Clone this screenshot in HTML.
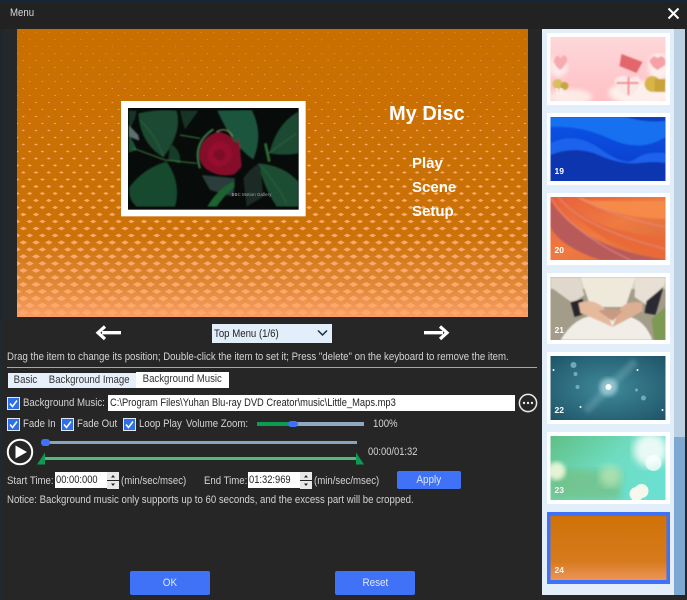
<!DOCTYPE html>
<html><head><meta charset="utf-8"><title>Menu</title>
<style>
html,body{margin:0;padding:0;width:687px;height:600px;overflow:hidden;background:#262626}
body{position:relative;font-family:"Liberation Sans","DejaVu Sans",sans-serif;font-size:11px;color:#d4d4d4}
.a{position:absolute}
.t{position:absolute;white-space:nowrap;line-height:14px;height:14px;transform:scaleX(.875);transform-origin:0 0}
.h{position:absolute;white-space:nowrap;font-weight:bold;color:#fff}
.cb{position:absolute;width:13px;height:13px}
.in{position:absolute;background:#fff;color:#222;line-height:16px;height:16px;overflow:hidden}
.in span{display:block;white-space:nowrap;transform:scaleX(.85);transform-origin:0 0}
.tab{position:absolute;background:#e6effa;color:#333;text-align:center;line-height:15px;height:15px;top:373px}
.tab span{display:inline-block;white-space:nowrap;transform:scaleX(.875)}
.btn{position:absolute;background:#3f72f7;color:#dfe8ff;text-align:center;border-radius:2px}
.btn span{display:inline-block;transform:scaleX(.9)}
</style></head><body>
<div class="a" style="left:0;top:0;width:687px;height:2px;background:#14263a"></div>
<div class="a" style="left:0;top:2px;width:687px;height:27px;background:#222"></div>
<div class="a" style="left:0;top:29px;width:17px;height:290px;background:linear-gradient(90deg,#1c262c 0,#23282a 3px,#24282a 100%)"></div>
<div class="a" style="left:0;top:319px;width:3px;height:281px;background:linear-gradient(90deg,#1d2a32,#262626)"></div>
<div class="t" style="left:10px;top:6px;color:#d8d8d8">Menu</div>
<svg class="a" style="left:667px;top:7px" width="13" height="13" viewBox="0 0 13 13"><path d="M1.5 1.5L11.5 11.5M11.5 1.5L1.5 11.5" stroke="#fff" stroke-width="2" fill="none"/></svg>

<svg class="a" style="left:17px;top:29px" width="511" height="288" viewBox="0 0 511 288">
<defs>
<linearGradient id="bg" x1="0" y1="0" x2="0" y2="1"><stop offset="0" stop-color="#c96f00"/><stop offset=".72" stop-color="#cb7208"/><stop offset=".9" stop-color="#e08a3a"/><stop offset="1" stop-color="#fa9e64"/></linearGradient>
<path id="d" transform="scale(1 .551)" fill="#ffa86c" stroke="#ffa86c" stroke-linejoin="miter" d="M6.35 6.25l.1.1l-.1.1l-.1-.1zM0 18.95l.1.1l-.1.1l-.1-.1zM12.7 18.95l.1.1l-.1.1l-.1-.1z"/>
<pattern id="p0" width="12.7" height="14" patternUnits="userSpaceOnUse"><use href="#d" stroke-width=".7"/></pattern>
<pattern id="p1" width="12.7" height="14" patternUnits="userSpaceOnUse"><use href="#d" stroke-width=".85"/></pattern>
<pattern id="p2" width="12.7" height="14" patternUnits="userSpaceOnUse"><use href="#d" stroke-width="1"/></pattern>
<pattern id="p3" width="12.7" height="14" patternUnits="userSpaceOnUse"><use href="#d" stroke-width="1.15"/></pattern>
<pattern id="p4" width="12.7" height="14" patternUnits="userSpaceOnUse"><use href="#d" stroke-width="1.3"/></pattern>
<pattern id="p5" width="12.7" height="14" patternUnits="userSpaceOnUse"><use href="#d" stroke-width="1.5"/></pattern>
<pattern id="p6" width="12.7" height="14" patternUnits="userSpaceOnUse"><use href="#d" stroke-width="1.8"/></pattern>
<pattern id="p7" width="12.7" height="14" patternUnits="userSpaceOnUse"><use href="#d" stroke-width="2.1"/></pattern>
<pattern id="p8" width="12.7" height="14" patternUnits="userSpaceOnUse"><use href="#d" stroke-width="2.5"/></pattern>
<pattern id="p9" width="12.7" height="14" patternUnits="userSpaceOnUse"><use href="#d" stroke-width="2.9"/></pattern>
<pattern id="p10" width="12.7" height="14" patternUnits="userSpaceOnUse"><use href="#d" stroke-width="3.2"/></pattern>
<pattern id="p11" width="12.7" height="14" patternUnits="userSpaceOnUse"><use href="#d" stroke-width="3.6"/></pattern>
<pattern id="p12" width="12.7" height="14" patternUnits="userSpaceOnUse"><use href="#d" stroke-width="4"/></pattern>
<pattern id="p13" width="12.7" height="14" patternUnits="userSpaceOnUse"><use href="#d" stroke-width="4.4"/></pattern>
<pattern id="p14" width="12.7" height="14" patternUnits="userSpaceOnUse"><use href="#d" stroke-width="4.8"/></pattern>
<pattern id="p15" width="12.7" height="14" patternUnits="userSpaceOnUse"><use href="#d" stroke-width="5.2"/></pattern>
<pattern id="p16" width="12.7" height="14" patternUnits="userSpaceOnUse"><use href="#d" stroke-width="5.6"/></pattern>
<pattern id="p17" width="12.7" height="14" patternUnits="userSpaceOnUse"><use href="#d" stroke-width="6"/></pattern>
<pattern id="p18" width="12.7" height="14" patternUnits="userSpaceOnUse"><use href="#d" stroke-width="6.4"/></pattern>
<pattern id="p19" width="12.7" height="14" patternUnits="userSpaceOnUse"><use href="#d" stroke-width="6.9"/></pattern>
<pattern id="p20" width="12.7" height="14" patternUnits="userSpaceOnUse"><use href="#d" stroke-width="7.5"/></pattern>
</defs>
<rect width="511" height="288" fill="url(#bg)"/>
<rect y="0" width="511" height="14" fill="url(#p0)"/><rect y="14" width="511" height="14" fill="url(#p1)"/>
<rect y="28" width="511" height="14" fill="url(#p2)"/><rect y="42" width="511" height="14" fill="url(#p3)"/>
<rect y="56" width="511" height="14" fill="url(#p4)"/><rect y="70" width="511" height="14" fill="url(#p5)"/>
<rect y="84" width="511" height="14" fill="url(#p6)"/><rect y="98" width="511" height="14" fill="url(#p7)"/>
<rect y="112" width="511" height="14" fill="url(#p8)"/><rect y="126" width="511" height="14" fill="url(#p9)"/>
<rect y="140" width="511" height="14" fill="url(#p10)"/><rect y="154" width="511" height="14" fill="url(#p11)"/>
<rect y="168" width="511" height="14" fill="url(#p12)"/><rect y="182" width="511" height="14" fill="url(#p13)"/>
<rect y="196" width="511" height="14" fill="url(#p14)"/><rect y="210" width="511" height="14" fill="url(#p15)"/>
<rect y="224" width="511" height="14" fill="url(#p16)"/><rect y="238" width="511" height="14" fill="url(#p17)"/>
<rect y="252" width="511" height="14" fill="url(#p18)"/><rect y="266" width="511" height="14" fill="url(#p19)"/>
<rect y="280" width="511" height="8" fill="url(#p20)"/>
</svg>

<svg class="a" style="left:120px;top:100px" width="190" height="120" viewBox="0 0 570 360">
<defs><filter id="ph" x="0" y="0" width="100%" height="100%"><feGaussianBlur stdDeviation="2"/></filter><clipPath id="phc"><rect x="24" y="24" width="512" height="305"/></clipPath></defs>
<rect x="3" y="3" width="554" height="346" fill="#fff"/>
<rect x="24" y="24" width="512" height="305" fill="#070b09"/>
<g clip-path="url(#phc)"><g filter="url(#ph)">
<path d="M180 32H235L195 88Q185 60 180 32Z" fill="#123626"/>
<path d="M26 32H50L45 55L28 90Z" fill="#143626"/>
<path d="M26 75L55 105L58 122L26 110Z" fill="#5d6f6d"/>
<path d="M26 105Q45 130 50 150L26 158Z" fill="#1c5032"/>
<path d="M55 40Q110 26 170 32Q188 95 130 172Q60 130 55 40Z" fill="#1b4a31"/>
<path d="M292 32L395 30Q432 100 400 178Q340 140 292 32Z" fill="#1f553e"/>
<path d="M448 160Q470 70 535 35V160Q490 168 448 160Z" fill="#1a4a31"/>
<path d="M415 190Q490 195 535 245V320H470Q430 260 415 190Z" fill="#1b4e33"/>
<path d="M28 262Q70 205 140 185Q185 250 165 320H50Q25 300 28 262Z" fill="#184a2d"/>
<path d="M245 225L345 235L340 290L270 270Z" fill="#2c3c3a"/>
<path d="M262 320Q290 270 340 245L345 258Q310 290 290 320Z" fill="#1f6430"/>
<path d="M150 130Q185 150 180 190L145 178Z" fill="#143a27"/>
<path d="M370 235Q395 200 420 190L430 290L380 320Z" fill="#1d2a28"/>
<path d="M180 105L240 115M40 145L135 180L230 190" stroke="#3f7d45" stroke-width="3" fill="none"/>
<path d="M60 60Q110 110 130 170M445 160L530 100M415 190Q470 250 500 310" stroke="#2f6a45" stroke-width="2" fill="none"/>
<path d="M436 130L448 185" stroke="#2f6f35" stroke-width="8" fill="none"/>
<path d="M240 205Q215 130 280 88" stroke="#3c7a4a" stroke-width="6" fill="none"/>
<path d="M290 95Q320 78 338 110" stroke="#8a9c6a" stroke-width="3" fill="none"/>
<path d="M238 165Q240 112 295 95Q340 105 348 135L357 115L365 200L345 222Q300 235 260 208Q238 190 238 165Z" fill="#860a2a"/>
<path d="M262 165Q270 125 305 125Q340 135 335 170Q325 200 290 200Q265 190 262 165Z" fill="#960d2f"/>
<path d="M280 165Q285 145 305 148Q322 160 312 178Q295 190 280 165Z" fill="#7c0926"/>
</g></g>
<text x="335" y="288" font-size="13" fill="#a8aea8" font-family="Liberation Sans,sans-serif" letter-spacing=".3">BBC  Motion Gallery</text>
</svg>

<div class="h" style="left:389px;top:102px;font-size:20px;line-height:24px">My Disc</div>
<div class="h" style="left:412px;top:155px;font-size:15px;line-height:18px">Play</div>
<div class="h" style="left:412px;top:179px;font-size:15px;line-height:18px">Scene</div>
<div class="h" style="left:412px;top:203px;font-size:15px;line-height:18px">Setup</div>

<svg class="a" style="left:94px;top:323px" width="30" height="20" viewBox="0 0 30 20"><path d="M27 9.7H8" stroke="#fff" stroke-width="3.4"/><path d="M11 3.5L4 9.7L11 16" stroke="#fff" stroke-width="3.2" fill="none"/></svg>
<svg class="a" style="left:421px;top:323px" width="30" height="20" viewBox="0 0 30 20"><path d="M3 9.7H22" stroke="#fff" stroke-width="3.4"/><path d="M19 3.5L26 9.7L19 16" stroke="#fff" stroke-width="3.2" fill="none"/></svg>

<div class="a" style="left:212px;top:324px;width:120px;height:19px;background:#e3eefb"></div>
<div class="t" style="left:214px;top:327px;color:#222">Top Menu (1/6)</div>
<svg class="a" style="left:317px;top:329px" width="11" height="8" viewBox="0 0 11 8"><path d="M1 1.5L5.5 6L10 1.5" stroke="#1d2a44" stroke-width="1.5" fill="none"/></svg>

<div class="t" style="left:7px;top:350px">Drag the item to change its position; Double-click the item to set it; Press "delete" on the keyboard to remove the item.</div>
<div class="a" style="left:7px;top:367px;width:530px;height:1px;background:#a8a8a8"></div>

<div class="tab" style="left:8px;width:35px"><span>Basic</span></div>
<div class="tab" style="left:43px;width:93px"><span>Background Image</span></div>
<div class="tab" style="left:136px;width:93px;top:372px;height:16px;background:#fff"><span>Background Music</span></div>

<svg width="0" height="0" style="position:absolute"><defs><g id="ck"><rect x=".5" y=".5" width="12" height="12" fill="#2e6fe8" stroke="#dfe8f5"/><path d="M3 6.5L5.5 9.5L10 3.5" stroke="#fff" stroke-width="1.5" fill="none"/></g></defs></svg>
<svg class="cb" style="left:7px;top:397px"><use href="#ck"/></svg>
<div class="t" style="left:23px;top:396px">Background Music:</div>
<div class="in" style="left:108px;top:395px;width:405px;padding-left:2px"><span>C:\Program Files\Yuhan Blu-ray DVD Creator\music\Little_Maps.mp3</span></div>
<svg class="a" style="left:518px;top:393px" width="20" height="20" viewBox="0 0 20 20"><circle cx="10" cy="10" r="8.6" fill="#262626" stroke="#e8e8e8" stroke-width="1.5"/><circle cx="6" cy="10" r="1.2" fill="#e8e8e8"/><circle cx="10" cy="10" r="1.2" fill="#e8e8e8"/><circle cx="14" cy="10" r="1.2" fill="#e8e8e8"/></svg>

<svg class="cb" style="left:7px;top:418px"><use href="#ck"/></svg>
<div class="t" style="left:23px;top:417px">Fade In</div>
<svg class="cb" style="left:61px;top:418px"><use href="#ck"/></svg>
<div class="t" style="left:77px;top:417px">Fade Out</div>
<svg class="cb" style="left:123px;top:418px"><use href="#ck"/></svg>
<div class="t" style="left:139px;top:417px">Loop Play</div>
<div class="t" style="left:186px;top:417px">Volume Zoom:</div>
<div class="a" style="left:257px;top:422px;width:107px;height:4px;background:#8fa9c2"></div>
<div class="a" style="left:257px;top:422px;width:36px;height:4px;background:#0e9a50"></div>
<div class="a" style="left:288px;top:421px;width:10px;height:6px;border-radius:3px;background:#3f72f7"></div>
<div class="t" style="left:373px;top:417px">100%</div>

<svg class="a" style="left:6px;top:438px" width="28" height="28" viewBox="0 0 28 28"><circle cx="14" cy="14" r="12.2" fill="none" stroke="#fff" stroke-width="2"/><path d="M9.5 7.5L21 14L9.5 20.5Z" fill="#fff"/></svg>
<div class="a" style="left:42px;top:441px;width:315px;height:3px;background:#86a3c0"></div>
<div class="a" style="left:41px;top:439px;width:9px;height:7px;border-radius:3px;background:#3f72f7"></div>
<div class="a" style="left:42px;top:457px;width:316px;height:3px;background:#52ba80"></div>
<svg class="a" style="left:36px;top:452px" width="11" height="13" viewBox="0 0 11 13"><path d="M9 .5V12.5H1Z" fill="#0e9a50"/></svg>
<svg class="a" style="left:354px;top:452px" width="11" height="13" viewBox="0 0 11 13"><path d="M2 .5V12.5H10Z" fill="#0e9a50"/></svg>
<div class="t" style="left:368px;top:445px;transform:scaleX(.85)">00:00/01:32</div>

<div class="t" style="left:7px;top:474px">Start Time:</div>
<div class="in" style="left:55px;top:472px;width:51px;padding-left:1px"><span>00:00:000</span></div>
<svg class="a" style="left:107px;top:472px" width="12" height="17" viewBox="0 0 12 17"><rect width="12" height="8" fill="#e8e8e8"/><rect y="9" width="12" height="8" fill="#e8e8e8"/><path d="M4 5.5L6 3L8 5.5Z" fill="#222"/><path d="M4 11.5L6 14L8 11.5Z" fill="#222"/></svg>
<div class="t" style="left:121px;top:474px">(min/sec/msec)</div>
<div class="t" style="left:204px;top:474px">End Time:</div>
<div class="in" style="left:248px;top:472px;width:51px;padding-left:1px"><span>01:32:969</span></div>
<svg class="a" style="left:300px;top:472px" width="12" height="17" viewBox="0 0 12 17"><rect width="12" height="8" fill="#e8e8e8"/><rect y="9" width="12" height="8" fill="#e8e8e8"/><path d="M4 5.5L6 3L8 5.5Z" fill="#222"/><path d="M4 11.5L6 14L8 11.5Z" fill="#222"/></svg>
<div class="t" style="left:314px;top:474px">(min/sec/msec)</div>
<div class="btn" style="left:397px;top:471px;width:64px;height:18px;line-height:19px"><span>Apply</span></div>
<div class="t" style="left:7px;top:493px">Notice: Background music only supports up to 60 seconds, and the excess part will be cropped.</div>

<div class="btn" style="left:130px;top:571px;width:80px;height:24px;line-height:25px"><span>OK</span></div>
<div class="btn" style="left:335px;top:571px;width:80px;height:24px;line-height:25px"><span>Reset</span></div>

<div class="a" style="left:542px;top:29px;width:132px;height:566px;background:#e3eefb"></div>
<div class="a" style="left:674px;top:29px;width:11px;height:408px;background:#bcd0e3"></div>
<div class="a" style="left:674px;top:437px;width:11px;height:158px;background:#7ca8d2"></div>

<svg class="a" style="left:547px;top:33px" width="123" height="552" viewBox="0 0 123 552" font-family="Liberation Sans,sans-serif">
<defs>
<linearGradient id="g18" x1="0" y1="0" x2="0" y2="1"><stop offset="0" stop-color="#fdd8da"/><stop offset="1" stop-color="#ffc0c4"/></linearGradient>
<linearGradient id="g19" x1="0" y1="0" x2="0" y2="1"><stop offset="0" stop-color="#0a55e8"/><stop offset="1" stop-color="#0c3ac8"/></linearGradient>
<linearGradient id="g20" x1="0" y1="0" x2="1" y2="1"><stop offset="0" stop-color="#e8603a"/><stop offset=".5" stop-color="#ef7a42"/><stop offset="1" stop-color="#d86a3a"/></linearGradient>
<linearGradient id="g23" x1="0" y1="0" x2="1" y2=".6"><stop offset="0" stop-color="#5fbf85"/><stop offset=".55" stop-color="#6fdcc0"/><stop offset="1" stop-color="#6be0d0"/></linearGradient>
<linearGradient id="g24" x1="0" y1="0" x2="0" y2="1"><stop offset="0" stop-color="#cf7208"/><stop offset=".7" stop-color="#d67a1c"/><stop offset="1" stop-color="#ec9458"/></linearGradient>
<radialGradient id="g22" cx=".5" cy=".5" r=".7"><stop offset="0" stop-color="#3f8a9a"/><stop offset="1" stop-color="#1f5468"/></radialGradient>
<filter id="s" x="0" y="0" width="100%" height="100%"><feGaussianBlur stdDeviation=".8"/></filter>
<filter id="b2"><feGaussianBlur stdDeviation="2"/></filter>
<filter id="b4"><feGaussianBlur stdDeviation="4"/></filter>
<clipPath id="c"><rect width="115" height="64"/></clipPath>
</defs>
<rect width="123" height="72" fill="#fff"/><rect y="80" width="123" height="72" fill="#fff"/><rect y="160" width="123" height="72" fill="#fff"/><rect y="240" width="123" height="71" fill="#fff"/><rect y="319" width="123" height="72" fill="#fff"/><rect y="399" width="123" height="72" fill="#fff"/><rect y="479" width="123" height="72" fill="#3f72f7"/>

<g transform="translate(3.5 4)" clip-path="url(#c)">
<rect width="115" height="64" fill="url(#g18)"/>
<g filter="url(#s)">
<ellipse cx="20" cy="60" rx="22" ry="8" fill="#fbeae6" filter="url(#b2)"/>
<ellipse cx="8" cy="30" rx="9" ry="10" fill="#fdeaea" filter="url(#b2)"/>
<path d="M3 24Q6 15 10 21Q15 15 17 23Q14 30 10 33Q5 30 3 24Z" fill="#f7aab0"/>
<ellipse cx="92" cy="56" rx="34" ry="12" fill="#fdf0ec" filter="url(#b2)"/>
<ellipse cx="108" cy="30" rx="10" ry="14" fill="#fdf0ec" filter="url(#b2)"/>
<path d="M99 24Q103 17 107 21Q112 17 115 23V28L107 33Q101 30 99 24Z" fill="#f7a0a6"/>
<path d="M71 17L92 25L86 36L69 29Z" fill="#e2666c"/>
<path d="M64 43Q70 36 80 41Q90 36 90 46Q86 56 78 60Q66 54 64 43Z" fill="#fbe8e6"/>
<path d="M66 46L88 46M78 40L78 58" stroke="#ee8c92" stroke-width="2"/>
<circle cx="102" cy="47" r="8" fill="#d9b548"/><rect x="104" y="42" width="11" height="13" fill="#c9a238"/>
<circle cx="7" cy="47" r="5" fill="#d8c060"/><circle cx="14" cy="49" r="4" fill="#c4a63a"/>
</g>
<text x="4" y="57" font-size="8.5" font-weight="bold" fill="#fff" fill-opacity=".6">18</text>
</g>

<g transform="translate(3.5 84)" clip-path="url(#c)">
<rect width="115" height="64" fill="url(#g19)"/>
<g filter="url(#s)">
<path d="M0 10Q30 8 60 22T115 20V0H0Z" fill="#1470f0"/>
<path d="M75 0Q95 6 115 4V0Z" fill="#0a3fc0"/>
<path d="M0 26Q25 14 50 32T85 42T115 36V64H0Z" fill="#1b62ec"/>
<path d="M0 38Q25 28 48 38T88 46T115 46V64H0Z" fill="#0c34b0"/>
</g>
<text x="4" y="57" font-size="8.5" font-weight="bold" fill="#fff">19</text>
</g>

<g transform="translate(3.5 164)" clip-path="url(#c)">
<rect width="115" height="63" fill="url(#g20)"/>
<g filter="url(#s)">
<path d="M0 4Q30 50 115 63H50Q10 50 0 30Z" fill="#b95a5a"/>
<path d="M10 0Q40 35 115 40V62Q60 52 25 20Z" fill="#e96a38"/>
<path d="M25 0Q60 20 115 22V4H40Z" fill="#f58a48"/>
<path d="M0 0Q20 35 80 63M8 0Q30 30 115 52M30 0Q55 18 115 30" stroke="#d89088" stroke-width="1.5" fill="none" opacity=".6"/>
</g>
<text x="4" y="56" font-size="8.5" font-weight="bold" fill="#fff">20</text>
</g>

<g transform="translate(3.5 244)" clip-path="url(#c)">
<rect width="115" height="63" fill="#a39c88"/>
<g filter="url(#s)">
<rect width="115" height="12" fill="#d8d2c4"/>
<path d="M30 0H85L75 30H40Z" fill="#efe9dc"/>
<path d="M0 0H28L34 18L22 26L0 10Z" fill="#e0d8cc"/>
<path d="M85 0H115V6L96 28L84 20Z" fill="#e8e0d4"/>
<path d="M20 25L32 22L37 36L24 40Z" fill="#27282c"/><path d="M96 24L113 10L105 38L94 36Z" fill="#2a2b30"/>
<path d="M10 63Q30 30 60 42Q90 32 102 63Z" fill="#f1eee8"/>
<path d="M101 42L115 30V63H104Z" fill="#7d9a55"/>
<path d="M28 26Q45 20 56 34L62 50Q45 42 30 36Z" fill="#e4b99c"/>
<path d="M92 26Q76 22 68 34L62 50Q78 42 92 34Z" fill="#dcae92"/>
<path d="M48 34Q60 30 72 34L62 44Z" fill="#c99a82"/>
</g>
<text x="4" y="56" font-size="8.5" font-weight="bold" fill="#fff">21</text>
</g>

<g transform="translate(3.5 323)" clip-path="url(#c)">
<rect width="115" height="64" fill="url(#g22)"/>
<path d="M35 55L85 5" stroke="#7fb5c0" stroke-width="8" opacity=".35" filter="url(#b2)"/>
<circle cx="58" cy="31" r="9" fill="#bfe5ea" opacity=".6" filter="url(#b2)"/><circle cx="58" cy="31" r="3" fill="#fff"/>
<g fill="#8fc5d0" opacity=".7"><circle cx="23" cy="9" r="3"/><circle cx="25" cy="18" r="2"/><circle cx="27" cy="31" r="2"/><circle cx="93" cy="42" r="2.5"/><circle cx="86" cy="34" r="1.5"/></g>
<g fill="#fff"><circle cx="3" cy="14" r="1"/><circle cx="30" cy="51" r="1"/><circle cx="87" cy="14" r="1"/><circle cx="112" cy="54" r="1"/></g>
<text x="4" y="57" font-size="8.5" font-weight="bold" fill="#fff">22</text>
</g>

<g transform="translate(3.5 403)" clip-path="url(#c)">
<rect width="115" height="64" fill="url(#g23)"/>
<rect y="34" width="70" height="30" fill="#74bd80" opacity=".7" filter="url(#b4)"/>
<circle cx="6" cy="35" r="9" fill="#fbfbe0" opacity=".85" filter="url(#b2)"/>
<circle cx="60" cy="40" r="11" fill="#bfe8b8" opacity=".7" filter="url(#b4)"/>
<circle cx="100" cy="14" r="17" fill="#fff" opacity=".85" filter="url(#b4)"/>
<circle cx="103" cy="27" r="8" fill="#fff" opacity=".7"/>
<circle cx="86" cy="58" r="7" fill="#f6f8ee"/><circle cx="91" cy="55" r="7" fill="#f6f8ee"/>
<text x="4" y="57" font-size="8.5" font-weight="bold" fill="#fff" fill-opacity=".9">23</text>
</g>

<g transform="translate(3.5 483)">
<rect width="116" height="64" fill="url(#g24)"/>
<text x="4" y="57" font-size="8.5" font-weight="bold" fill="#fff" fill-opacity=".9">24</text>
</g>
</svg>
</body></html>
